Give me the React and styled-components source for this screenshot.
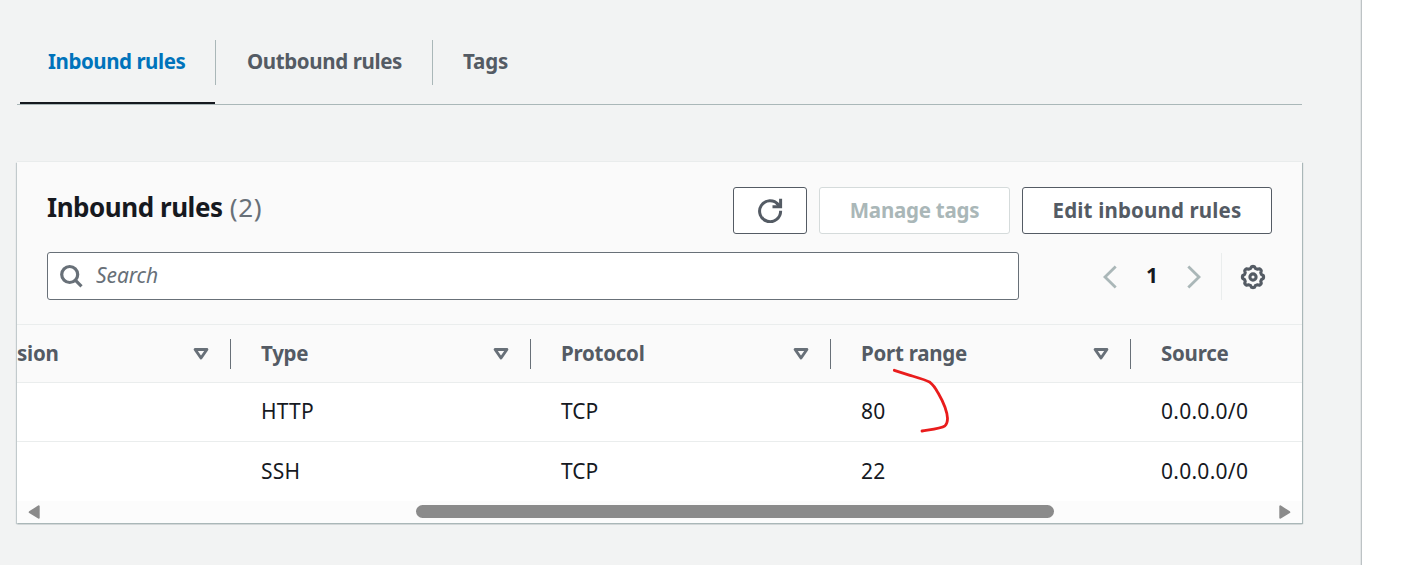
import React from "react";
import styled, { createGlobalStyle } from "styled-components";

const GlobalStyle = createGlobalStyle`
  *, *::before, *::after { box-sizing: border-box; }
  html, body { margin: 0; background: #fff; }
  body {
    overflow: hidden;
    font-family: "Noto Sans", "Open Sans", sans-serif;
    font-size: 21px;
    line-height: 30px;
    color: #16191f;
  }
  button, input { font: inherit; }
`;

const Page = styled.main`
  position: relative;
  width: 1362px;
  height: 565px;
  padding-left: 17px;
  background: #f2f3f3;
  border-right: 1px solid #bdc3c5;
  box-shadow: inset -1px 0 0 #e3e6e7;
`;

const TabList = styled.nav`
  display: flex;
  width: 1285px;
  height: 105px;
  padding: 40px 0 0 3px;
  border-bottom: 1px solid #aab7b8;
`;

const Tab = styled.a`
  display: flex;
  flex-direction: column;
  justify-content: space-between;
  width: ${(p) => p.$width}px;
  color: ${(p) => (p.$active ? "#0073bb" : "#545b64")};
  font-size: 20.5px;
  font-weight: 700;
  letter-spacing: ${(p) => p.$track || 0}px;
  white-space: nowrap;
  border-bottom: 2px solid ${(p) => (p.$active ? "#16191f" : "transparent")};
`;

const TabLabel = styled.span`
  height: 45px;
  padding-left: ${(p) => p.$inset}px;
  line-height: 43px;
  ${(p) => !p.$last && "box-shadow: 1px 0 0 #aab7b8;"}
`;

const Card = styled.section`
  width: 1285px;
  height: 361px;
  margin-top: 57px;
  background: #fff;
  box-shadow: 0 -1px 0 #e9ecec, 1px 1px 1px #aab7b8, -1px 1px 1px #c2cacc, 0 1px 1px #879596;
`;

const CardHeader = styled.header`
  height: 163px;
  padding: 25px 30px 0;
  background: #fafafa;
  border-bottom: 1px solid #eaeded;
`;

const TitleRow = styled.div`
  display: flex;
  justify-content: space-between;
  height: 47px;
`;

const Title = styled.h2`
  margin: 0;
  font-size: 26px;
  line-height: 41px;
  font-weight: 700;
  letter-spacing: -0.46px;
  white-space: nowrap;
`;

const Counter = styled.span`
  margin-left: 1px;
  color: #687078;
  font-weight: 400;
  letter-spacing: 0.6px;
`;

const Actions = styled.div`
  display: flex;
  gap: 12px;
`;

const Button = styled.button`
  display: flex;
  align-items: center;
  justify-content: center;
  width: ${(p) => p.$width}px;
  height: 47px;
  padding: 0 0 2px;
  background: #fff;
  border: 1px solid ${(p) => (p.disabled ? "#d5dbdb" : "#545b64")};
  border-radius: 3px;
  color: ${(p) => (p.disabled ? "#aab7b8" : "#545b64")};
  font-size: 20.5px;
  font-weight: 700;
  letter-spacing: ${(p) => p.$track || 0}px;
  white-space: nowrap;
`;

const ToolRow = styled.div`
  display: flex;
  align-items: center;
  margin-top: 18px;
`;

const SearchBox = styled.label`
  display: flex;
  align-items: center;
  width: 972px;
  height: 48px;
  padding-left: 11px;
  background: #fff;
  border: 1px solid #687078;
  border-radius: 3px;
`;

const SearchInput = styled.input`
  flex: 1;
  height: 44px;
  margin-left: 12px;
  padding: 0 0 2px;
  border: 0;
  outline: 0;
  background: transparent;
  &::placeholder {
    color: #687078;
    opacity: 1;
    font-style: italic;
    letter-spacing: -0.1px;
  }
`;

const Pager = styled.div`
  display: flex;
  align-items: center;
  justify-content: space-between;
  width: 98px;
  margin-left: 84px;
  padding-top: 2px;
`;

const PageNumber = styled.span`
  font-weight: 700;
  line-height: 42px;
  padding-bottom: 4px;
`;

const Settings = styled.div`
  display: flex;
  align-items: center;
  height: 47px;
  margin-left: 20px;
  padding: 2px 0 0 18px;
  border-left: 1px solid #eaeded;
`;

const Row = styled.div`
  display: grid;
  grid-template-columns: 214px 300px 300px 300px 171px;
  align-items: center;
  height: ${(p) => p.$height}px;
  padding-bottom: ${(p) => p.$lift || 0}px;
  background: ${(p) => (p.$head ? "#fafafa" : "#fff")};
  ${(p) => p.$line && "border-bottom: 1px solid #eaeded;"}
`;

const HeadCell = styled.div`
  display: flex;
  align-items: center;
  justify-content: space-between;
  height: 30px;
  padding: 0 21px 0 ${(p) => (p.$first ? 0 : 30)}px;
  color: #545b64;
  font-size: 20.5px;
  font-weight: 700;
  line-height: 28px;
  letter-spacing: -0.25px;
  white-space: nowrap;
  ${(p) => !p.$last && "border-right: 1px solid #687078;"}
`;

const HeadLabel = styled.span`
  padding-bottom: 1px;
`;

const Cell = styled.div`
  padding-left: 30px;
  letter-spacing: ${(p) => p.$track || 0}px;
  white-space: nowrap;
`;

const ScrollBar = styled.div`
  display: flex;
  align-items: center;
  justify-content: space-between;
  height: 22px;
  padding: 0 11px;
  background: #fcfcfc;
`;

const Thumb = styled.div`
  width: 638px;
  height: 13px;
  margin: 0 0 2px 151px;
  border-radius: 7px;
  background: #8b8b8b;
`;

const Mark = styled.svg`
  position: absolute;
  left: 885px;
  top: 362px;
  pointer-events: none;
`;

const RefreshIcon = () => (
  <svg width="26" height="26" viewBox="0 0 26 26" fill="none" stroke="#545b64" strokeWidth="3">
    <path d="M23.6 13.8A10.5 10.5 0 1 1 21.2 7.5L23 9.5" />
    <path d="M15.5 9.7H23.6V1.7" />
    <path d="M19.5 6L23 9.5" />
  </svg>
);

const SearchIcon = () => (
  <svg width="25" height="25" viewBox="0 0 25 25" fill="none" stroke="#687078" strokeWidth="3.2">
    <circle cx="10.7" cy="10.5" r="8" />
    <path d="M16.3 16.2L22.5 22.4" />
  </svg>
);

const Chevron = ({ right }) => (
  <svg width="14" height="24" viewBox="0 0 14 24" fill="none" stroke="#aab7b8" strokeWidth="2.8">
    <path d={right ? "M1.3 1.5L12 12L1.3 22.5" : "M12.7 1.5L2 12L12.7 22.5"} />
  </svg>
);

const GEAR_PATH = Array.from({ length: 96 }, (_, i) => {
  const a = (i / 96) * Math.PI * 2;
  const r = 9.7 + 0.9 * Math.tanh(2.2 * Math.cos(8 * a));
  return `${i ? "L" : "M"}${(13 + r * Math.sin(a)).toFixed(2)} ${(13 - r * Math.cos(a)).toFixed(2)}`;
}).join("") + "Z";

const GearIcon = () => (
  <svg width="26" height="26" viewBox="0 0 26 26" fill="none" stroke="#545b64" strokeWidth="3.1" strokeLinejoin="round">
    <path d={GEAR_PATH} />
    <circle cx="13" cy="13" r="3.1" />
  </svg>
);

const SortIcon = () => (
  <svg width="16" height="14" viewBox="0 0 16 14" fill="none" stroke="#687078" strokeWidth="2.9" strokeLinejoin="round">
    <path d="M2.1 2.5H13.9L8 11Z" />
  </svg>
);

const ScrollArrow = ({ right }) => (
  <svg width="12" height="16" viewBox="0 0 12 16" fill="#8b8b8b" stroke="#8b8b8b" strokeWidth="2" strokeLinejoin="round">
    <path d={right ? "M1.3 2.3V13.7L10.3 8.2Z" : "M10.7 2.3V13.7L1.7 8.2Z"} />
  </svg>
);

const columns = ["sion", "Type", "Protocol", "Port range", "Source"];

const rules = [
  { type: "HTTP", protocol: "TCP", port: "80", source: "0.0.0.0/0" },
  { type: "SSH", protocol: "TCP", port: "22", source: "0.0.0.0/0" },
];

export default function App() {
  return (
    <>
      <GlobalStyle />
      <Page>
        <TabList>
          <Tab $active $width={195} $track={-0.45}>
            <TabLabel $inset={28}>Inbound rules</TabLabel>
          </Tab>
          <Tab $width={217} $track={-0.38}>
            <TabLabel $inset={32}>Outbound rules</TabLabel>
          </Tab>
          <Tab $width={120} $track={-0.1}>
            <TabLabel $inset={31} $last>Tags</TabLabel>
          </Tab>
        </TabList>
        <Card>
          <CardHeader>
            <TitleRow>
              <Title>
                Inbound rules <Counter>(2)</Counter>
              </Title>
              <Actions>
                <Button $width={74} aria-label="Refresh"><RefreshIcon /></Button>
                <Button $width={191} $track={-0.25} disabled>Manage tags</Button>
                <Button $width={250} $track={0.15}>Edit inbound rules</Button>
              </Actions>
            </TitleRow>
            <ToolRow>
              <SearchBox>
                <SearchIcon />
                <SearchInput placeholder="Search" />
              </SearchBox>
              <Pager>
                <Chevron />
                <PageNumber>1</PageNumber>
                <Chevron right />
              </Pager>
              <Settings><GearIcon /></Settings>
            </ToolRow>
          </CardHeader>
          <Row $head $line $height={58}>
            {columns.map((label, i) => (
              <HeadCell key={label} $first={i === 0} $last={i === columns.length - 1}>
                <HeadLabel>{label}</HeadLabel>
                {i < columns.length - 1 && <SortIcon />}
              </HeadCell>
            ))}
          </Row>
          {rules.map((r, i) => (
            <Row key={r.type} $height={59} $line={i === 0} $lift={2}>
              <Cell />
              <Cell $track={0.2}>{r.type}</Cell>
              <Cell>{r.protocol}</Cell>
              <Cell $track={0.3}>{r.port}</Cell>
              <Cell $track={0.27}>{r.source}</Cell>
            </Row>
          ))}
          <ScrollBar>
            <ScrollArrow />
            <Thumb />
            <ScrollArrow right />
          </ScrollBar>
        </Card>
        <Mark width="70" height="76" viewBox="0 0 70 76" fill="none" stroke="#e91c1c" strokeWidth="2.8" strokeLinecap="round" strokeLinejoin="round">
          <path d="M9.3 8.3L25 13.3C35 16.3 41 18 45 20.3C48 22.5 51 27 53.3 31.3C56 36 58.5 41 60 45.3C61.5 49.5 62.4 52.5 62.5 56.3C62.5 60 62 62 60 63.8C56 66.5 46 67.5 37 69" />
        </Mark>
      </Page>
    </>
  );
}
